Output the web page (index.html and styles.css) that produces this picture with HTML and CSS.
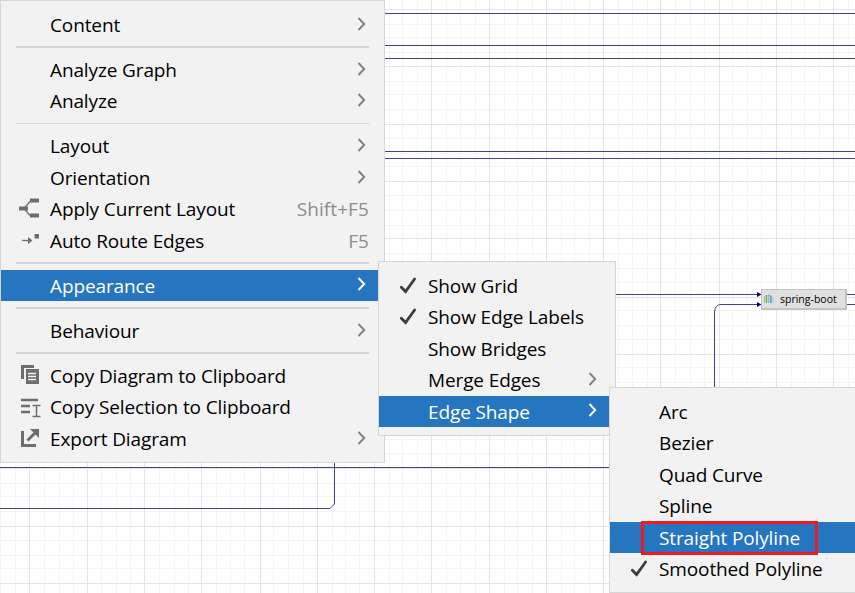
FILE: index.html
```html
<!DOCTYPE html>
<html lang="en">
<head>
<meta charset="utf-8">
<title>Diagram</title>
<link rel="stylesheet" href="styles.css">
</head>
<body>
<svg width="0" height="0" class="defs">
  <symbol id="chev" viewBox="0 0 10 14"><path d="M1.5 1 7.2 7 1.5 13" fill="none" stroke="currentColor" stroke-width="1.9"/></symbol>
  <symbol id="check" viewBox="0 0 18 18"><path d="M2.3 10.2 6.6 14.6 15.6 2" fill="none" stroke="#3c3c3c" stroke-width="2.8" stroke-linecap="round"/></symbol>
</svg>
<main class="canvas">
  <svg class="graph" width="855" height="593">
    <path id="minor" class="minor"/>
    <path id="major" class="major"/>
    <path class="edge" d="M0 13.5H855M0 45.5H855M0 58.5H855M0 151.5H855M0 158.5H855M0 467.5H855M0 508.5H330L334.5 504V440M600 294.5H758M714.5 400V312Q715 304.5 721 304.5H758M846 294.5H855M846 304.5H855"/>
    <path class="arrow" d="M757 292 761.5 294.5 757 297zM757 302 761.5 304.5 757 307z"/>
  </svg>
  <div class="node">
    <svg width="10" height="10"><path d="M.5 2V9M7.500 2V9" stroke="#9fb0b8"/><path d="M2.500 1V9" stroke="#62b543" stroke-width="1.400"/><path d="M4.500 0V9" stroke="#9fb0b8"/><path d="M6.500 1V9" stroke="#40b6e0" stroke-width="1.400"/><path d="M9 3V9" stroke="#b2bec4"/></svg>
    <span>spring-boot</span>
  </div>

  <nav class="menu menu-main">
    <div class="item"><span class="label">Content</span><svg class="chev"><use href="#chev"/></svg></div>
    <div class="sep"></div>
    <div class="item"><span class="label">Analyze Graph</span><svg class="chev"><use href="#chev"/></svg></div>
    <div class="item"><span class="label">Analyze</span><svg class="chev"><use href="#chev"/></svg></div>
    <div class="sep"></div>
    <div class="item"><span class="label">Layout</span><svg class="chev"><use href="#chev"/></svg></div>
    <div class="item"><span class="label">Orientation</span><svg class="chev"><use href="#chev"/></svg></div>
    <div class="item"><svg class="icon" viewBox="0 0 22 22"><path d="M5 10.500 11 3.500M5 10.500 11 17.500" stroke="#6e6e6e" stroke-width="1.300"/><path d="M0 8.500H9V12.500H0zM11 .5H20V4.500H11zM11 15.500H20V19.500H11z" fill="#6e6e6e"/></svg><span class="label">Apply Current Layout</span><span class="key">Shift+F5</span></div>
    <div class="item"><svg class="icon" viewBox="0 0 22 22"><path d="M3 10.500H10" stroke="#6e6e6e" stroke-width="1.300"/><path d="M9 7 13.500 10.500 9 14zM15.500 4H20V8.500H15.500z" fill="#6e6e6e"/></svg><span class="label">Auto Route Edges</span><span class="key">F5</span></div>
    <div class="sep"></div>
    <div class="item active"><span class="label">Appearance</span><svg class="chev"><use href="#chev"/></svg></div>
    <div class="sep"></div>
    <div class="item"><span class="label">Behaviour</span><svg class="chev"><use href="#chev"/></svg></div>
    <div class="sep"></div>
    <div class="item"><svg class="icon" viewBox="0 0 22 22"><path d="M2 0H15V3H5V14H2zM7 4H20V19H7z" fill="#6e6e6e"/><path d="M9 8.500H17M9 11.500H17M9 14.500H17" stroke="#f2f2f2" stroke-width="1.300"/></svg><span class="label">Copy Diagram to Clipboard</span></div>
    <div class="item"><svg class="icon" viewBox="0 0 22 22"><path d="M2 4H19M2 10H11M2 16H11" stroke="#6e6e6e" stroke-width="2.500"/><path d="M13.500 9.500H21.500M13.500 20.500H21.500M17.500 9.500V20.500" stroke="#6e6e6e" stroke-width="1.500"/></svg><span class="label">Copy Selection to Clipboard</span></div>
    <div class="item"><svg class="icon" viewBox="0 0 22 22"><path d="M3.500 3V17.500H17" fill="none" stroke="#6e6e6e" stroke-width="3"/><path d="M8.500 12.500 16 5" stroke="#6e6e6e" stroke-width="3"/><path d="M11 1H20V10z" fill="#6e6e6e"/></svg><span class="label">Export Diagram</span><svg class="chev"><use href="#chev"/></svg></div>
  </nav>

  <nav class="menu menu-appearance">
    <div class="item"><svg class="check"><use href="#check"/></svg><span class="label">Show Grid</span></div>
    <div class="item"><svg class="check"><use href="#check"/></svg><span class="label">Show Edge Labels</span></div>
    <div class="item"><span class="label">Show Bridges</span></div>
    <div class="item"><span class="label">Merge Edges</span><svg class="chev"><use href="#chev"/></svg></div>
    <div class="item active"><span class="label">Edge Shape</span><svg class="chev"><use href="#chev"/></svg></div>
  </nav>

  <nav class="menu menu-shape">
    <div class="item"><span class="label">Arc</span></div>
    <div class="item"><span class="label">Bezier</span></div>
    <div class="item"><span class="label">Quad Curve</span></div>
    <div class="item"><span class="label">Spline</span></div>
    <div class="item active"><span class="label">Straight Polyline</span><i class="outline"></i></div>
    <div class="item"><svg class="check"><use href="#check"/></svg><span class="label">Smoothed Polyline</span></div>
  </nav>
</main>
<script src="grid.js"></script>
</body>
</html>
```
FILE: styles.css
```css
body {
  margin: 0;
  overflow: hidden;
  background: #fff;
  font-family: "Open Sans", "Noto Sans", sans-serif;
}
.defs { position: absolute; }
.canvas {
  position: relative;
  width: 855px;
  height: 593px;
  overflow: hidden;
}
.graph { display: block; }
.minor { stroke: #f5f5f5; }
.major { stroke: #e5e5e5; }
.edge { fill: none; stroke: #4040a0; }
.arrow { fill: #00008b; }
.node {
  position: absolute;
  left: 761px;
  top: 289px;
  width: 86px;
  height: 21px;
  box-sizing: border-box;
  border: 1px solid #c2c2c2;
  border-right-width: 2px;
  border-bottom-width: 2px;
  background: #e0e0e0;
  display: flex;
  align-items: center;
  gap: 6px;
  padding-left: 2px;
  font-size: 10.5px;
  color: #000;
  white-space: nowrap;
}
.menu {
  position: absolute;
  box-sizing: border-box;
  padding-top: 8px;
  border: 1px solid #d6d6d6;
  background: #f2f2f2;
  font-size: 19px;
  color: #000;
}
.menu-main { left: 0; top: 0; width: 385px; height: 463px; }
.menu-appearance { left: 378px; top: 261px; width: 238px; height: 175px; }
.menu-shape { left: 609px; top: 387px; width: 260px; height: 206px; }
.item {
  position: relative;
  display: flex;
  align-items: center;
  height: 31.5px;
  padding: 0 15px 0 49px;
  white-space: nowrap;
}
.menu-appearance .item { padding-right: 16px; }
.item.active { height: 31px; margin-bottom: 0.5px; background: #2675bf; color: #fff; }
.label, .key { line-height: 31px; padding-top: 1.2px; letter-spacing: -0.12px; }
.key { margin-left: auto; color: #8c8c8c; letter-spacing: 0.1px; }
.chev {
  width: 10px;
  height: 14px;
  margin-left: auto;
  margin-right: 2px;
  margin-top: -2.5px;
  color: #808080;
}
.menu-appearance .chev { margin-right: 1px; }
.active .chev { color: #fff; }
.icon {
  width: 22px;
  height: 22px;
  margin-left: -31px;
  margin-right: 9px;
}
.check {
  width: 18px;
  height: 18px;
  margin-left: -29px;
  margin-right: 11px;
}
.sep { height: 13.5px; padding: 5.6px 15px 0; box-sizing: border-box; }
.sep::before { content: ""; display: block; height: 1.5px; background: #d6d6d6; }
.outline {
  position: absolute;
  left: 31px;
  top: -1px;
  width: 171px;
  height: 28px;
  border: 3px solid #ed1c24;
}
```
FILE: grid.js
```js
const xMajor = [29, 87, 144, 201, 260, 317, 374, 431, 489, 546, 603, 660, 719, 776, 833];
const xMinor = [0, 15, 44, 59, 73, 101, 116, 130, 159, 174, 188, 216, 230, 244, 273, 288, 303, 332, 345, 359, 389, 402, 417, 446, 460, 475, 504, 517, 532, 561, 574, 589, 618, 632, 647, 675, 690, 704, 732, 747, 761, 791, 804, 819, 848];
const yMajor = [9, 66, 124, 181, 238, 297, 354, 411, 468, 526, 583];
const yMinor = [24, 37, 52, 81, 94, 109, 138, 153, 166, 195, 210, 225, 253, 268, 282, 310, 325, 339, 367, 382, 397, 426, 439, 453, 483, 496, 511, 540, 555, 568];
const lines = (xs, ys) =>
  xs.map(x => `M${x + 0.5} 0V593`).join('') + ys.map(y => `M0 ${y + 0.5}H855`).join('');
document.getElementById('minor').setAttribute('d', lines(xMinor, yMinor));
document.getElementById('major').setAttribute('d', lines(xMajor, yMajor));
```
